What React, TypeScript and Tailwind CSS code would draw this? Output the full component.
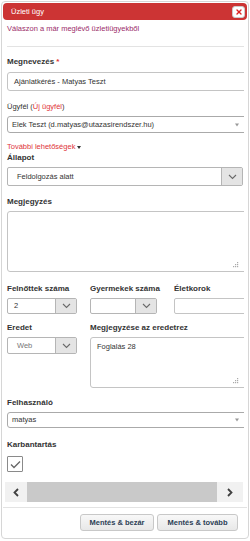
import { X } from 'lucide-react';

const font = "font-['Liberation_Sans',Arial,Helvetica,sans-serif]";

function Chevron() {
  return (
    <svg width="9" height="6" viewBox="0 0 9 6" className="block">
      <path d="M1 1l3.5 3.5L8 1" fill="none" stroke="#6a6a6a" strokeWidth="1.1" />
    </svg>
  );
}

function Grip() {
  return (
    <svg width="6" height="6" viewBox="0 0 6 6" className="absolute right-[8px] bottom-[3px]">
      <rect x="4" y="0" width="1.2" height="1.2" fill="#aaa" />
      <rect x="2" y="2" width="1.2" height="1.2" fill="#aaa" />
      <rect x="4" y="2" width="1.2" height="1.2" fill="#aaa" />
      <rect x="0" y="4" width="1.2" height="1.2" fill="#aaa" />
      <rect x="2" y="4" width="1.2" height="1.2" fill="#aaa" />
      <rect x="4" y="4" width="1.2" height="1.2" fill="#aaa" />
    </svg>
  );
}

// select with a grey arrow button on the right
function BoxSelect({ value, width, height, pad, muted }: { value: string; width: string; height: string; pad: string; muted?: boolean }) {
  return (
    <div className={`${width} ${height} flex border border-[#b5b5b5] rounded-[2px] bg-white`}>
      <div className={`flex-1 flex items-center ${pad} text-[7.5px] ${muted ? 'text-[#777]' : 'text-[#333]'}`}>{value}</div>
      <div className="w-[21px] flex items-center justify-center bg-[#e4e4e4] border-l border-[#b5b5b5]">
        <Chevron />
      </div>
    </div>
  );
}

// select2-like combo
function Combo({ value, height }: { value: string; height: string }) {
  return (
    <div className={`relative ${height} flex items-center border border-[#aaa] rounded-[3px] bg-white pl-[4px] text-[7.5px] text-[#333]`}>
      {value}
      <span className="absolute right-[8px] top-1/2 -translate-y-1/2 w-0 h-0 border-l-[2px] border-r-[2px] border-t-[3px] border-l-transparent border-r-transparent border-t-[#999]" />
    </div>
  );
}

function Label({ children, className = '' }: { children: React.ReactNode; className?: string }) {
  return <div className={`text-[8px] leading-[10px] font-bold text-[#333] ${className}`}>{children}</div>;
}

export default function App() {
  return (
    <div className={`w-[250px] h-[541px] bg-white pt-[1px] pl-[1px] ${font}`}>
      <div className="w-[248px] h-[538px] border border-[#d6d6d6] rounded-[4px] p-[1px] flex flex-col">
        {/* Title bar */}
        <div className="h-[17px] shrink-0 bg-[#cc3434] rounded-[4px] flex items-center justify-between pl-[8px] pr-[2px]">
          <span className="text-white text-[7.5px] leading-none">Üzleti ügy</span>
          <button className="w-[13px] h-[12px] bg-white border border-[#ccc] rounded-[3px] flex items-center justify-center">
            <X className="w-[8px] h-[8px] text-[#d22]" strokeWidth={4} />
          </button>
        </div>

        {/* Content */}
        <div className="ml-[2px] w-[239px] overflow-hidden">
          <div className="w-[241px] ml-[2px]">
            <div className="mt-[4px] text-[7.5px] leading-[10px] text-[#9b2c6a]">Válaszon a már meglévő üzletiügyekből</div>
            <div className="mt-[12px] h-px bg-[#e3e3e3]" />

            <Label className="mt-[10px]">
              Megnevezés <span className="text-[#d33]">*</span>
            </Label>
            <div className="mt-[5px] h-[19px] flex items-center border border-[#c4c4c4] rounded-[3px] pl-[6px] text-[7.5px] text-[#333]">
              Ajánlatkérés - Matyas Teszt
            </div>

            <div className="mt-[11px] text-[7.5px] leading-[10px] text-[#333]">
              Ügyfél (<span className="text-[#e0353a]">Új ügyfél</span>)
            </div>
            <div className="mt-[4px]">
              <Combo value="Elek Teszt (d.matyas@utazasirendszer.hu)" height="h-[17px]" />
            </div>

            <div className="mt-[9px] text-[7.5px] leading-[10px] text-[#e0353a]">
              További lehetőségek
              <span className="inline-block align-middle ml-[2px] w-0 h-0 border-l-[2px] border-r-[2px] border-t-[3px] border-l-transparent border-r-transparent border-t-[#333]" />
            </div>
            <Label className="mt-[1px]">Állapot</Label>
            <div className="mt-[4px]">
              <BoxSelect value="Feldolgozás alatt" width="w-[236px]" height="h-[19px]" pad="pl-[9px]" />
            </div>

            <Label className="mt-[11px]">Megjegyzés</Label>
            <div className="relative mt-[4px] h-[61px] border border-[#c4c4c4] rounded-[3px]">
              <Grip />
            </div>

            <div className="mt-[12px] flex">
              <div className="w-[83px]">
                <Label>Felnőttek száma</Label>
                <div className="mt-[4px]">
                  <BoxSelect value="2" width="w-[70px]" height="h-[16px]" pad="pl-[6px]" />
                </div>
              </div>
              <div className="w-[84px]">
                <Label>Gyermekek száma</Label>
                <div className="mt-[4px]">
                  <BoxSelect value="" width="w-[67px]" height="h-[16px]" pad="pl-[6px]" />
                </div>
              </div>
              <div className="flex-1">
                <Label>Életkorok</Label>
                <div className="mt-[4px] h-[16px] border border-[#c4c4c4] rounded-[2px]" />
              </div>
            </div>

            <div className="mt-[9px] flex">
              <div className="w-[83px]">
                <Label>Eredet</Label>
                <div className="mt-[4px]">
                  <BoxSelect value="Web" width="w-[70px]" height="h-[17px]" pad="pl-[9px]" muted />
                </div>
              </div>
              <div className="flex-1">
                <Label>Megjegyzése az eredetrez</Label>
                <div className="relative mt-[4px] h-[51px] border border-[#c4c4c4] rounded-[3px] pl-[6px] pt-[4px] text-[7.5px] leading-[10px] text-[#333]">
                  Foglalás 28
                  <Grip />
                </div>
              </div>
            </div>

            <Label className="mt-[10px]">Felhasználó</Label>
            <div className="mt-[4px]">
              <Combo value="matyas" height="h-[16px]" />
            </div>

            <Label className="mt-[12px]">Karbantartás</Label>
            <div className="mt-[6px] w-[16px] h-[16px] border border-[#8a8a8a] rounded-[1px] flex items-center justify-center bg-white">
              <svg width="11" height="9" viewBox="0 0 11 9">
                <path d="M1 4.5l3 3L10 1.5" fill="none" stroke="#666" strokeWidth="1.3" />
              </svg>
            </div>
          </div>

          {/* horizontal scrollbar */}
          <div className="mt-[10px] w-[238px] h-[20px] bg-[#f1f1f1] flex items-center">
            <div className="w-[22px] flex items-center justify-center">
              <svg width="6" height="9" viewBox="0 0 6 9">
                <path d="M5 1L1.5 4.5 5 8" fill="none" stroke="#404040" strokeWidth="1.8" />
              </svg>
            </div>
            <div className="w-[190px] h-[20px] bg-[#c9c9c9]" />
            <div className="flex-1 flex items-center justify-center">
              <svg width="6" height="9" viewBox="0 0 6 9">
                <path d="M1 1l3.5 3.5L1 8" fill="none" stroke="#404040" strokeWidth="1.8" />
              </svg>
            </div>
          </div>
        </div>

        {/* Button pane */}
        <div className="mt-[5px] border-t border-[#e3e3e3] pt-[6px] pr-[9px] flex justify-end gap-[3px]">
          <button className="w-[74px] h-[17px] rounded-[3px] border border-[#c8c8c8] bg-gradient-to-b from-[#f8f8f8] to-[#e8e8e8] text-[7.5px] font-bold text-[#2c3e55]">
            Mentés &amp; bezár
          </button>
          <button className="w-[81px] h-[17px] rounded-[3px] border border-[#c8c8c8] bg-gradient-to-b from-[#f8f8f8] to-[#e8e8e8] text-[7.5px] font-bold text-[#2c3e55]">
            Mentés &amp; tovább
          </button>
        </div>
      </div>
    </div>
  );
}
